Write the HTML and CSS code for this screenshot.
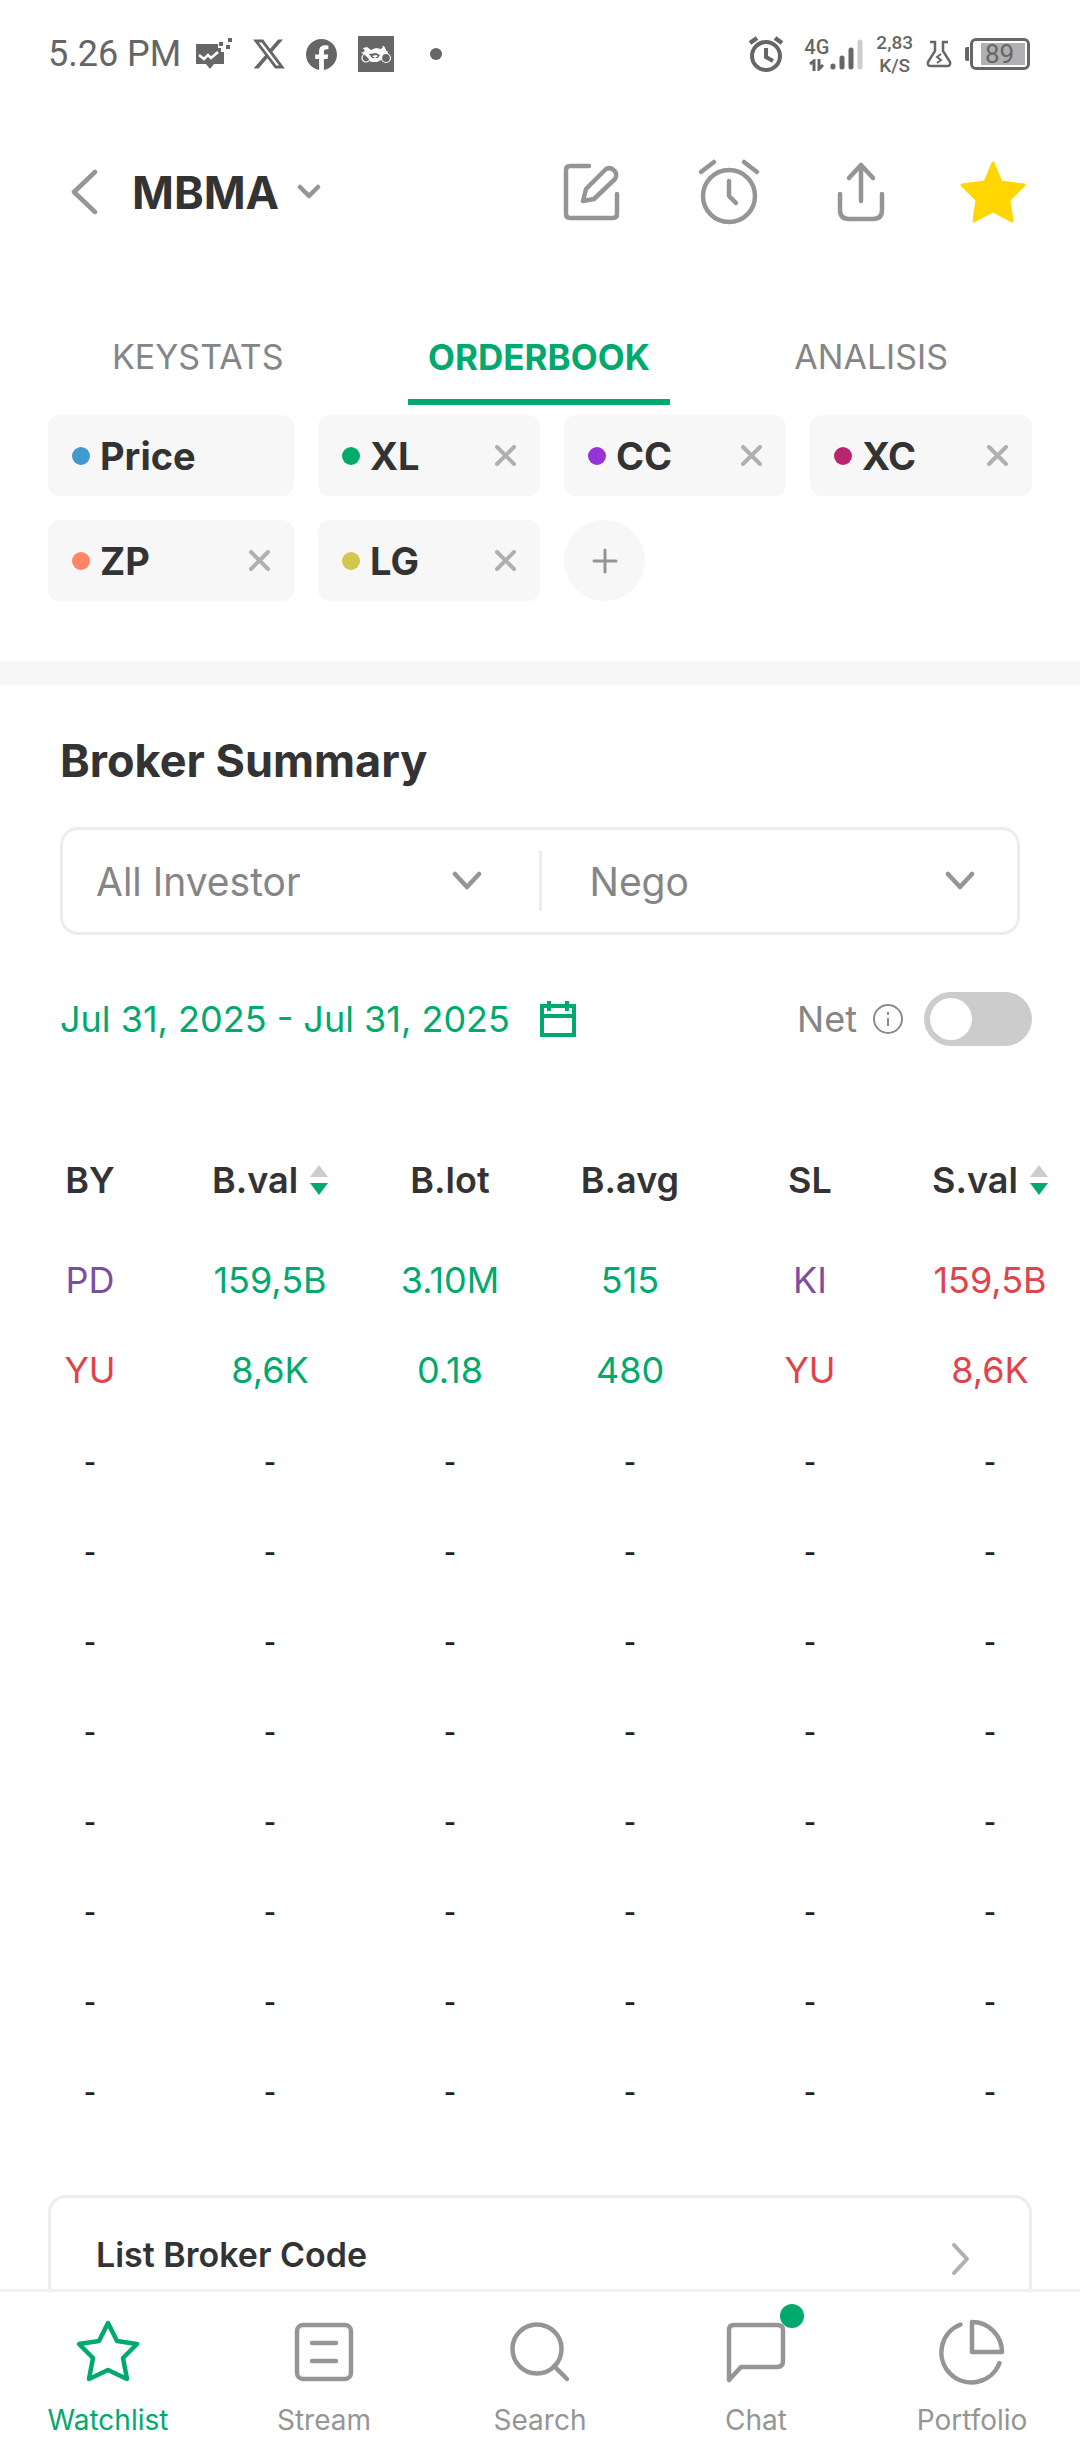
FILE: index.html
```html
<!DOCTYPE html>
<html lang="en">

<head>
  <meta charset="UTF-8" />
  <meta name="viewport" content="width=device-width, initial-scale=1.0, viewport-fit=cover" />
  <title>MBMA - Orderbook</title>
  <link rel="stylesheet" href="styles.css">
</head>

<body>
  <div class="app">

    <!-- Status bar -->
    <div class="status-bar">
      <div class="status-left">
        <span class="clock">5.26 PM</span>
        <svg width="36" height="32" viewBox="0 0 36 32" fill="#666">
          <path d="M0 6h22v4h3v4h3v12h-10l-4 5-4-5H0z" />
          <path d="M23 4h4v4h-4zM30 7h4v4h-4zM32 0h4v4h-4z" />
          <path d="M3 17l5 4 4-4 3 3 7-6" fill="none" stroke="#fff" stroke-width="2.5" />
        </svg>
        <svg width="32" height="30" viewBox="1.200 2.200 21.700 19.600" fill="#666">
          <path d="M18.244 2.25h3.308l-7.227 8.26 8.502 11.24H16.17l-5.214-6.817L4.99 21.75H1.68l7.73-8.835L1.254 2.25H8.08l4.713 6.231zm-1.161 17.52h1.833L7.084 4.126H5.117z" />
        </svg>
        <svg width="31" height="31" viewBox="0 0 24 24" fill="#666">
          <path d="M24 12.073c0-6.627-5.373-12-12-12s-12 5.373-12 12c0 5.99 4.388 10.954 10.125 11.854v-8.385H7.078v-3.47h3.047V9.43c0-3.007 1.792-4.669 4.533-4.669 1.312 0 2.686.235 2.686.235v2.953H15.83c-1.491 0-1.956.925-1.956 1.874v2.25h3.328l-.532 3.47h-2.796v8.385C19.612 23.027 24 18.062 24 12.073z" />
        </svg>
        <svg width="36" height="36" viewBox="0 0 36 36">
          <rect width="36" height="36" fill="#666" />
          <path d="M5 12l4-1 4 3 5-2 5 1 3-3 2 4 2 3-5 1-2 6-4 2h-6l-3-4-4-4-3-1 4-2z" fill="#fff" />
          <g fill="none" stroke="#fff" stroke-width="1.2">
            <circle cx="8" cy="22" r="4" />
            <circle cx="28" cy="22" r="4.5" />
            <path d="M25 10l4 8M27 16h3" />
          </g>
          <path d="M11 18l7-1 4 2-2 3h-6z" fill="#666" />
          <path d="M14 20l4-1 2 1-3 2z" fill="#fff" />
        </svg>
        <span class="more-dot"></span>
      </div>

      <div class="status-right">
        <svg width="36" height="36" viewBox="0 0 36 36" fill="none" stroke="#666" stroke-width="4">
          <circle cx="18" cy="20" r="14" />
          <path d="M18 12v9l7 4" />
          <path d="M2 7l7-5M34 7l-7-5" stroke-width="4.5" />
        </svg>
        <div class="signal">
          <div class="signal-type">
            <span>4G</span>
            <svg width="16" height="12" viewBox="0 0 16 12" fill="none" stroke="#666" stroke-width="3">
              <path d="M5 12V2L1 5M10 0v10l4-4" />
            </svg>
          </div>
          <svg width="34" height="34" viewBox="0 0 34 34" stroke="#666" stroke-width="5" stroke-linecap="round">
            <path d="M4 29v1M13 21v9M22 13v17" />
            <path d="M31 5v25" stroke="#ccc" />
          </svg>
        </div>
        <div class="speed">2,83<br>K/S</div>
        <svg width="26" height="28" viewBox="0 0 26 28" fill="none" stroke="#666" stroke-width="2.5">
          <path d="M4 2h5v9L2 22q-1 4 3 4h16q4 0 3-4l-7-11V2h5" />
          <path d="M15 14l-4 3 4 3-4 3" stroke-width="2" />
        </svg>
        <div class="battery">
          <span class="battery-nub"></span>
          <div class="battery-body"><span class="battery-level">89</span></div>
        </div>
      </div>
    </div>

    <!-- Stock header -->
    <header class="header">
      <button class="icon-btn" aria-label="Back">
        <svg width="28" height="46" viewBox="0 0 28 46" class="line-icon">
          <path d="M24 3L3 23l21 20" />
        </svg>
      </button>
      <h1 class="ticker">
        <button class="ticker-btn">MBMA
          <svg width="24" height="16" viewBox="0 0 24 16" class="line-icon">
            <path d="M3 3l9 9 9-9" />
          </svg>
        </button>
      </h1>
      <div class="header-actions">
        <button class="icon-btn" aria-label="Notes">
          <svg width="72" height="72" viewBox="0 0 72 72" class="line-icon">
            <path d="M28 10H9q-4 0-4 4v44q0 4 4 4h43q4 0 4-4V38" />
            <path d="M22 45l3-12 20-20a7 7 0 0 1 9 10L33 43z" />
          </svg>
        </button>
        <button class="icon-btn" aria-label="Price alert">
          <svg width="72" height="72" viewBox="0 0 72 72" class="line-icon">
            <circle cx="36" cy="40" r="26" />
            <path d="M36 25v15l7 7M8 16L21 6M64 16L51 6" />
          </svg>
        </button>
        <button class="icon-btn" aria-label="Share">
          <svg width="72" height="72" viewBox="0 0 72 72" class="line-icon">
            <path d="M36 45V9M24 22L36 9l12 13M15 38v16q0 9 9 9h24q9 0 9-9V38" />
          </svg>
        </button>
        <button class="icon-btn" aria-label="Remove from watchlist">
          <svg width="72" height="72" viewBox="0 0 72 72" fill="#ffd600" stroke="#ffd600" stroke-width="3" stroke-linejoin="round">
            <path d="M36 7l8 19 23 3-15 15 3 21-19-10-19 10 3-21L5 29l23-3z" />
          </svg>
        </button>
      </div>
    </header>

    <nav class="tabs">
      <a href="#keystats" class="tab">KEYSTATS</a>
      <a href="#orderbook" class="tab active">ORDERBOOK</a>
      <a href="#analisis" class="tab">ANALISIS</a>
    </nav>

    <main class="content">

      <!-- Broker chips -->
      <section class="chips">
        <div class="chip"><span class="dot blue"></span>Price</div>
        <div class="chip"><span class="dot green"></span>XL
          <button class="chip-close" aria-label="Remove XL"><svg width="21" height="21" viewBox="0 0 21 21"><path d="M2 2l17 17M19 2L2 19" /></svg></button>
        </div>
        <div class="chip"><span class="dot purple"></span>CC
          <button class="chip-close" aria-label="Remove CC"><svg width="21" height="21" viewBox="0 0 21 21"><path d="M2 2l17 17M19 2L2 19" /></svg></button>
        </div>
        <div class="chip"><span class="dot magenta"></span>XC
          <button class="chip-close" aria-label="Remove XC"><svg width="21" height="21" viewBox="0 0 21 21"><path d="M2 2l17 17M19 2L2 19" /></svg></button>
        </div>
        <div class="chip"><span class="dot orange"></span>ZP
          <button class="chip-close" aria-label="Remove ZP"><svg width="21" height="21" viewBox="0 0 21 21"><path d="M2 2l17 17M19 2L2 19" /></svg></button>
        </div>
        <div class="chip"><span class="dot yellow"></span>LG
          <button class="chip-close" aria-label="Remove LG"><svg width="21" height="21" viewBox="0 0 21 21"><path d="M2 2l17 17M19 2L2 19" /></svg></button>
        </div>
        <button class="chip-add" aria-label="Add broker">
          <svg width="26" height="26" viewBox="0 0 26 26"><path d="M13 2v22M2 13h22" /></svg>
        </button>
      </section>

      <!-- Broker summary -->
      <section class="summary">
        <h2 class="section-title">Broker Summary</h2>

        <div class="filters">
          <div class="filter">
            <select aria-label="Investor type">
              <option>All Investor</option>
            </select>
            <svg width="30" height="20" viewBox="0 0 30 20" class="line-icon"><path d="M3 3l12 13L27 3" /></svg>
          </div>
          <span class="filter-divider"></span>
          <div class="filter filter-market">
            <select aria-label="Market">
              <option>Nego</option>
            </select>
            <svg width="30" height="20" viewBox="0 0 30 20" class="line-icon"><path d="M3 3l12 13L27 3" /></svg>
          </div>
        </div>

        <div class="date-row">
          <button class="date-btn">Jul 31, 2025 - Jul 31, 2025
            <svg width="36" height="38" viewBox="0 0 36 38" fill="none" stroke="#00a96d" stroke-width="4">
              <path d="M2 6h32v29H2zM2 16h32M9 1v10M27 1v10" />
            </svg>
          </button>
          <div class="net">
            <label for="netToggle">Net</label>
            <svg width="30" height="30" viewBox="0 0 30 30" fill="none" stroke="#8c8c8c" stroke-width="2">
              <circle cx="15" cy="15" r="14" />
              <path d="M15 14v8M15 8v3" />
            </svg>
            <input type="checkbox" id="netToggle" class="switch" />
          </div>
        </div>
      </section>

      <table class="brokers">
        <thead>
          <tr>
            <th>BY</th>
            <th><button class="sort-btn">B.val
              <svg width="18" height="32" viewBox="0 0 18 32"><path d="M9 1l9 12H0z" fill="#ccc" /><path d="M9 31l9-12H0z" fill="#00a96d" /></svg>
            </button></th>
            <th>B.lot</th>
            <th>B.avg</th>
            <th>SL</th>
            <th><button class="sort-btn">S.val
              <svg width="18" height="32" viewBox="0 0 18 32"><path d="M9 1l9 12H0z" fill="#ccc" /><path d="M9 31l9-12H0z" fill="#00a96d" /></svg>
            </button></th>
          </tr>
        </thead>
        <tbody>
          <tr>
            <td class="local">PD</td>
            <td class="buy">159,5B</td>
            <td class="buy">3.10M</td>
            <td class="buy">515</td>
            <td class="local">KI</td>
            <td class="sell">159,5B</td>
          </tr>
          <tr>
            <td class="sell">YU</td>
            <td class="buy">8,6K</td>
            <td class="buy">0.18</td>
            <td class="buy">480</td>
            <td class="sell">YU</td>
            <td class="sell">8,6K</td>
          </tr>
          <tr class="empty"><td>-</td><td>-</td><td>-</td><td>-</td><td>-</td><td>-</td></tr>
          <tr class="empty"><td>-</td><td>-</td><td>-</td><td>-</td><td>-</td><td>-</td></tr>
          <tr class="empty"><td>-</td><td>-</td><td>-</td><td>-</td><td>-</td><td>-</td></tr>
          <tr class="empty"><td>-</td><td>-</td><td>-</td><td>-</td><td>-</td><td>-</td></tr>
          <tr class="empty"><td>-</td><td>-</td><td>-</td><td>-</td><td>-</td><td>-</td></tr>
          <tr class="empty"><td>-</td><td>-</td><td>-</td><td>-</td><td>-</td><td>-</td></tr>
          <tr class="empty"><td>-</td><td>-</td><td>-</td><td>-</td><td>-</td><td>-</td></tr>
          <tr class="empty"><td>-</td><td>-</td><td>-</td><td>-</td><td>-</td><td>-</td></tr>
        </tbody>
      </table>

      <a href="#broker-code" class="list-card">
        List Broker Code
        <svg width="20" height="42" viewBox="0 0 20 42"><path d="M3 11l13 14L3 39" /></svg>
      </a>
    </main>

    <!-- Bottom navigation -->
    <nav class="bottom-nav">
      <a href="#watchlist" class="nav-item active">
        <svg width="72" height="72" viewBox="0 0 72 72" class="line-icon">
          <path d="M36 8l9 18 20 3-14 14 4 21-19-9-19 9 4-21L7 29l20-3z" />
        </svg>
        Watchlist
      </a>
      <a href="#stream" class="nav-item">
        <svg width="72" height="72" viewBox="0 0 72 72" class="line-icon">
          <rect x="9" y="10" width="54" height="54" rx="6" />
          <path d="M24 28h24M24 46h24" />
        </svg>
        Stream
      </a>
      <a href="#search" class="nav-item">
        <svg width="72" height="72" viewBox="0 0 72 72" class="line-icon">
          <circle cx="33" cy="34" r="24.5" />
          <path d="M50 51l13 13" />
        </svg>
        Search
      </a>
      <a href="#chat" class="nav-item">
        <svg width="72" height="72" viewBox="0 0 72 72" class="line-icon">
          <path d="M9 65V15q0-5 5-5h43q6 0 6 5v31q0 6-6 6H21z" />
        </svg>
        <span class="badge"></span>
        Chat
      </a>
      <a href="#portfolio" class="nav-item">
        <svg width="72" height="72" viewBox="0 0 72 72" class="line-icon">
          <path d="M36 7v30h30A30 30 0 0 0 36 7z" />
          <path d="M24.500 9.500A30 30 0 1 0 63.500 48" />
        </svg>
        Portfolio
      </a>
    </nav>

  </div>
</body>

</html>
```

FILE: styles.css
```css
:root {
  --green: #00a96d;
  --red: #e0434b;
  --purple: #7b4fa0;
  --text: #333;
  --muted: #858585;
  --icon: #959595;
  --line: #ececec;
  --chip-bg: #f7f7f7;
}

* {
  box-sizing: border-box;
}

html,
body {
  margin: 0;
  padding: 0;
  height: 100%;
}

body {
  font-family: Inter, sans-serif;
  color: var(--text);
  background-color: #fff;
}

button,
select {
  font: inherit;
  color: inherit;
  background: none;
  border: none;
  padding: 0;
  cursor: pointer;
}

a {
  color: inherit;
  text-decoration: none;
}

svg {
  display: block;
  flex: none;
}

.app {
  display: flex;
  flex-direction: column;
  height: 100vh;
}

.line-icon {
  fill: none;
  stroke: currentColor;
  stroke-width: 4.5;
  stroke-linecap: round;
  stroke-linejoin: round;
}

/* Status bar */
.status-bar {
  display: flex;
  justify-content: space-between;
  align-items: center;
  height: 108px;
  padding: 0 50px 0 48px;
  font-family: Roboto, sans-serif;
  color: #666;
}

.status-left,
.status-right {
  display: flex;
  align-items: center;
}

.status-left {
  gap: 21px;
}

.clock {
  font-size: 36px;
  margin-right: -6px;
}

.more-dot {
  width: 12px;
  height: 12px;
  margin-left: 15px;
  border-radius: 50%;
  background-color: #666;
}

.status-right {
  gap: 13px;
}

.signal {
  display: flex;
  align-items: center;
  margin-left: 7px;
}

.signal-type {
  display: flex;
  flex-direction: column;
  align-items: center;
  gap: 2px;
  font-size: 20px;
  line-height: 20px;
  font-weight: 500;
}

.speed {
  font-size: 19px;
  line-height: 23px;
  font-weight: 500;
  text-align: center;
}

.battery {
  display: flex;
  align-items: center;
  gap: 1px;
}

.battery-nub {
  width: 4px;
  height: 14px;
  background-color: #666;
  border-radius: 2px 0 0 2px;
}

.battery-body {
  width: 60px;
  height: 32px;
  padding: 2px 2px 2px 8px;
  border: 3px solid #666;
  border-radius: 6px;
}

.battery-level {
  display: block;
  padding-left: 4px;
  background-color: #b0b0b0;
  font-size: 26px;
  line-height: 22px;
}

/* Stock header */
.header {
  display: flex;
  align-items: center;
  height: 168px;
  padding: 0 51px 0 71px;
}

.icon-btn {
  color: var(--icon);
}

.ticker {
  margin: 0 0 0 33px;
  font-size: 45px;
  font-weight: 700;
}

.ticker-btn {
  display: flex;
  align-items: center;
  gap: 18px;
}

.ticker-btn svg {
  color: var(--icon);
}

.header-actions {
  display: flex;
  gap: 60px;
  margin-left: auto;
}

/* Tabs */
.tabs {
  display: flex;
  justify-content: space-between;
  margin-top: 60px;
  padding: 0 112px 0 92px;
}

.tab {
  padding: 0 20px 21px;
  border-bottom: 6px solid transparent;
  font-size: 34px;
  line-height: 42px;
  color: var(--muted);
}

.tab.active {
  color: var(--green);
  border-color: var(--green);
  font-size: 35px;
  font-weight: 700;
}

.content {
  flex: 1;
  min-height: 0;
  overflow-y: auto;
  scrollbar-width: none;
}

/* Broker chips */
.chips {
  display: grid;
  grid-template-columns: 246fr 222fr 222fr 222fr;
  gap: 24px;
  padding: 10px 48px 60px;
  border-bottom: 24px solid var(--chip-bg);
}

.chip {
  display: flex;
  align-items: center;
  gap: 10px;
  height: 81px;
  padding: 0 24px;
  border-radius: 12px;
  background-color: var(--chip-bg);
  font-size: 38px;
  font-weight: 700;
}

.dot {
  width: 18px;
  height: 18px;
  border-radius: 50%;
}

.blue { background-color: #4299cf; }
.green { background-color: #00ab6b; }
.purple { background-color: #9634d9; }
.magenta { background-color: #ba2570; }
.orange { background-color: #ff8566; }
.yellow { background-color: #d1c74d; }

.chip-close {
  margin-left: auto;
}

.chip-close path {
  stroke: #b0b0b0;
  stroke-width: 4;
  stroke-linecap: round;
}

.chip-add {
  display: flex;
  align-items: center;
  justify-content: center;
  width: 81px;
  height: 81px;
  border-radius: 50%;
  background-color: var(--chip-bg);
}

.chip-add path {
  stroke: #959595;
  stroke-width: 3;
  stroke-linecap: round;
}

/* Broker summary */
.summary {
  padding: 48px 48px 0 60px;
}

.section-title {
  margin: 0;
  font-size: 45px;
  line-height: 56px;
  font-weight: 700;
}

.filters {
  display: flex;
  align-items: center;
  height: 108px;
  margin: 38px 12px 0 0;
  border: 3px solid var(--line);
  border-radius: 18px;
}

.filter {
  display: flex;
  align-items: center;
  flex: 1;
  height: 100%;
  padding: 0 57px 0 33px;
  color: var(--icon);
}

.filter-market {
  padding: 0 42px 0 48px;
}

.filter select {
  flex: 1;
  min-width: 0;
  height: 100%;
  appearance: none;
  font-size: 39px;
  color: var(--muted);
}

.filter-divider {
  width: 3px;
  height: 60px;
  background-color: var(--line);
}

.date-row {
  display: flex;
  justify-content: space-between;
  align-items: center;
  margin-top: 57px;
  font-size: 36px;
}

.date-btn {
  display: flex;
  align-items: center;
  gap: 30px;
  color: var(--green);
}

.net {
  display: flex;
  align-items: center;
  gap: 16px;
  color: var(--muted);
}

.switch {
  appearance: none;
  width: 108px;
  height: 54px;
  margin: 0 0 0 5px;
  padding: 6px;
  border-radius: 27px;
  background-color: #ccc;
  cursor: pointer;
}

.switch::before {
  content: "";
  display: block;
  width: 42px;
  height: 42px;
  border-radius: 50%;
  background-color: #fff;
}

.switch:checked {
  background-color: var(--green);
}

.switch:checked::before {
  margin-left: auto;
}

/* Broker table */
.brokers {
  width: 100%;
  margin-top: 79px;
  table-layout: fixed;
  border-collapse: collapse;
  font-size: 36px;
  text-align: center;
}

.brokers th,
.brokers td {
  padding: 0;
}

.brokers th {
  height: 110px;
  font-weight: 600;
}

.brokers td {
  height: 90px;
}

.sort-btn {
  display: flex;
  align-items: center;
  justify-content: center;
  gap: 12px;
  width: 100%;
}

.local { color: var(--purple); }
.buy { color: var(--green); }
.sell { color: var(--red); }

.empty {
  font-family: Roboto, sans-serif;
  color: #222;
}

.brokers .empty td {
  padding-top: 6px;
}

.list-card {
  display: flex;
  justify-content: space-between;
  align-items: center;
  margin: 60px 48px;
  padding: 36px 58px 36px 45px;
  border: 3px solid var(--line);
  border-radius: 18px;
  font-size: 34px;
  line-height: 42px;
  font-weight: 600;
}

.list-card path {
  fill: none;
  stroke: #b0b0b0;
  stroke-width: 4;
  stroke-linecap: round;
  stroke-linejoin: round;
}

/* Bottom navigation */
.bottom-nav {
  display: flex;
  border-top: 3px solid #f2f2f2;
  background-color: #fff;
}

.nav-item {
  position: relative;
  display: flex;
  flex: 1;
  flex-direction: column;
  align-items: center;
  gap: 16px;
  padding: 23px 0;
  font-size: 28px;
  line-height: 34px;
  color: var(--icon);
}

.nav-item.active {
  color: var(--green);
}

.badge {
  position: absolute;
  top: 12px;
  left: calc(50% + 24px);
  width: 24px;
  height: 24px;
  border-radius: 50%;
  background-color: var(--green);
}
```
